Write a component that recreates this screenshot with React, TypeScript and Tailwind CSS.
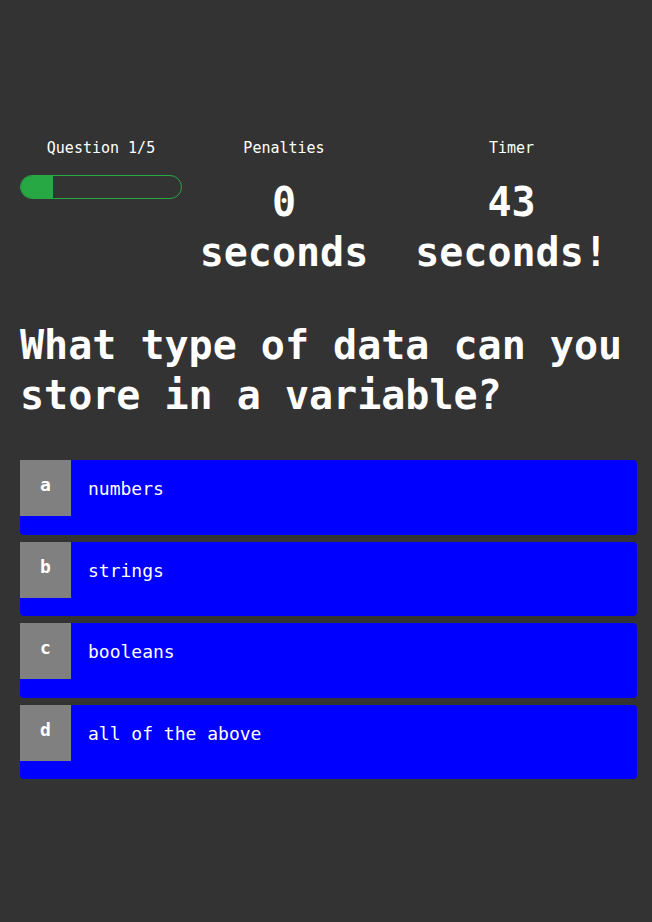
export default function App() {
  const answers = [
    { key: "a", text: "numbers" },
    { key: "b", text: "strings" },
    { key: "c", text: "booleans" },
    { key: "d", text: "all of the above" },
  ]

  return (
    <div className="min-h-[922px] bg-[#333333] text-white pl-5 pr-[15px] pt-[138px] font-['DejaVu_Sans_Mono',monospace]">
      <div className="flex">
        <div className="w-[162px] flex flex-col items-center">
          <p className="text-[15px] leading-[20px]">Question 1/5</p>
          <div className="mt-[17px] w-full h-6 rounded-full border border-[#28a745] overflow-hidden">
            <div className="h-full w-[20%] bg-[#28a745]" />
          </div>
        </div>
        <div className="w-[204px] flex flex-col items-center text-center">
          <p className="text-[15px] leading-[20px]">Penalties</p>
          <p className="mt-[19px] text-[40px] leading-[50px] font-bold">
            0<br />seconds
          </p>
        </div>
        <div className="flex-1 flex flex-col items-center text-center">
          <p className="text-[15px] leading-[20px]">Timer</p>
          <p className="mt-[19px] text-[40px] leading-[50px] font-bold">
            43<br />seconds!
          </p>
        </div>
      </div>

      <h1 className="mt-[43px] text-[40px] leading-[50px] font-bold">
        What type of data can you store in a variable?
      </h1>

      <div className="mt-[40px] flex flex-col gap-[7px]">
        {answers.map((a) => (
          <button key={a.key} className="h-[74.5px] bg-[#0000ff] rounded-[4px] flex items-start text-left">
            <span className="w-[51px] h-[56px] bg-[#808080] flex justify-center pt-[15px] text-[18px] leading-[20px] font-bold">
              {a.key}
            </span>
            <span className="pl-[17px] pt-[19px] text-[18px] leading-[20px]">{a.text}</span>
          </button>
        ))}
      </div>
    </div>
  )
}
